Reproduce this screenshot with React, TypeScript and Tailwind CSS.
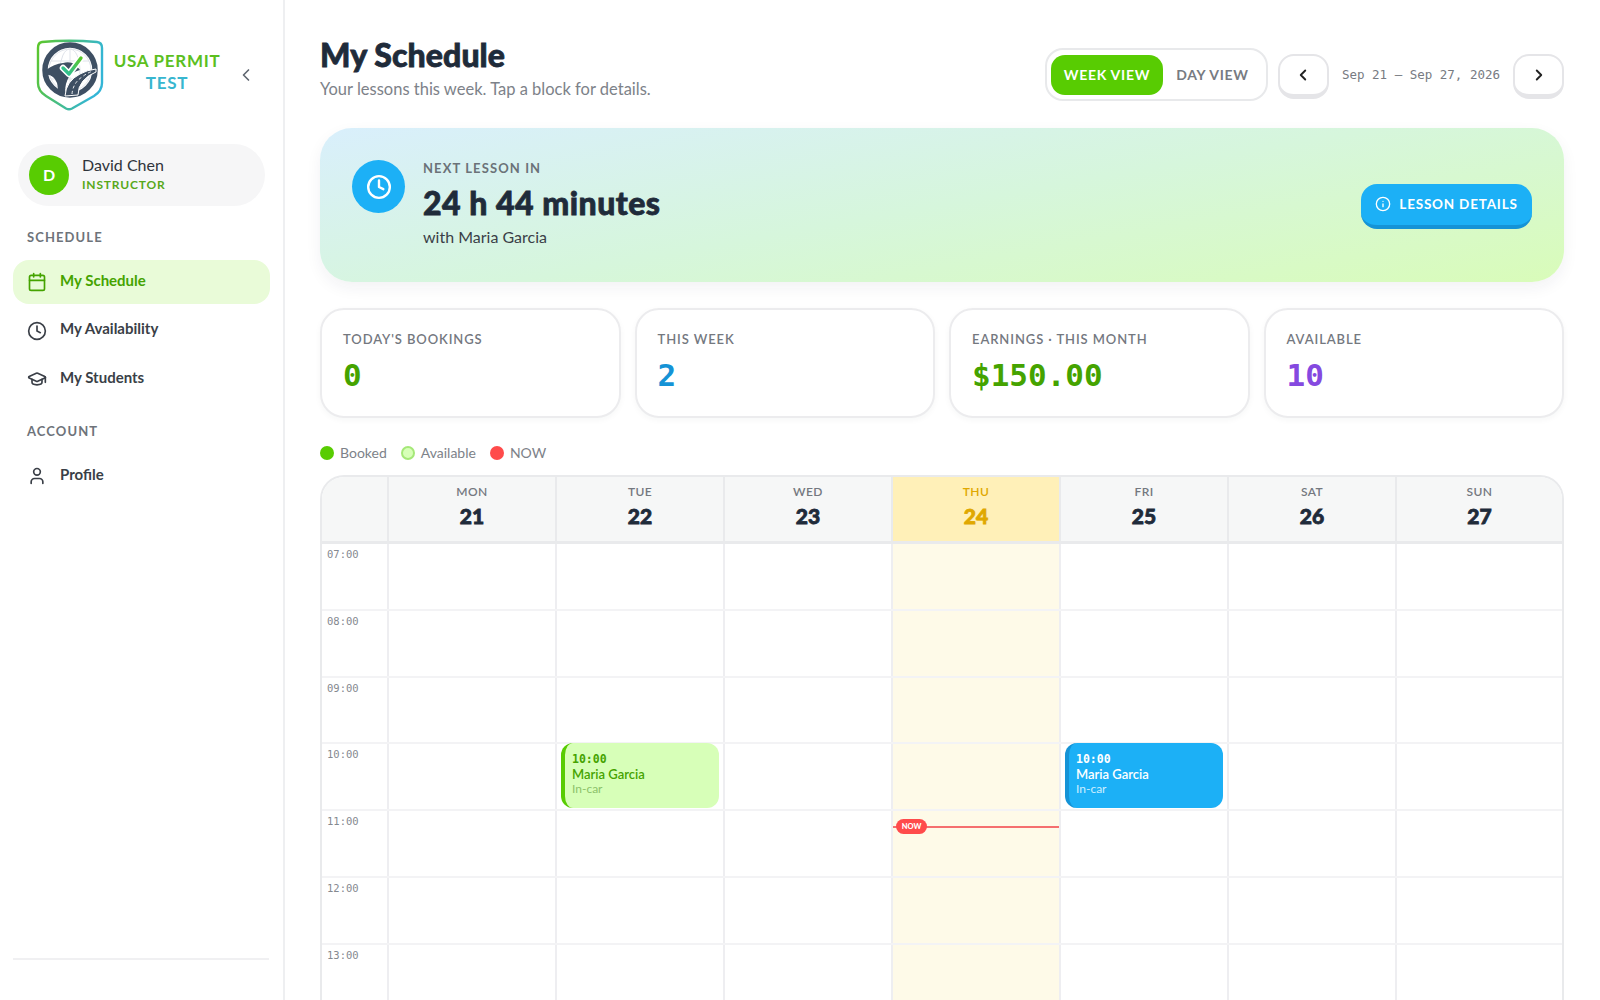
import { Calendar, ChevronLeft, ChevronRight, Clock, GraduationCap, Info, User } from 'lucide-react';

const sans = 'font-["Lato","Noto_Sans",sans-serif]';
const display = 'font-["Lato",sans-serif] font-black [-webkit-text-stroke:0.8px_currentColor]';
const mono = 'font-["DejaVu_Sans_Mono","Liberation_Mono",monospace]';

const days = [
  { name: 'MON', num: 21 },
  { name: 'TUE', num: 22 },
  { name: 'WED', num: 23 },
  { name: 'THU', num: 24, today: true },
  { name: 'FRI', num: 25 },
  { name: 'SAT', num: 26 },
  { name: 'SUN', num: 27 },
];
const hours = ['07:00', '08:00', '09:00', '10:00', '11:00', '12:00', '13:00'];
const stats = [
  { label: "TODAY'S BOOKINGS", value: '0', color: 'text-[#45a300]' },
  { label: 'THIS WEEK', value: '2', color: 'text-[#1593d6]' },
  { label: 'EARNINGS · THIS MONTH', value: '$150.00', color: 'text-[#45a300]' },
  { label: 'AVAILABLE', value: '10', color: 'text-[#8549e0]' },
];

function Logo() {
  return (
    <svg width="70" height="72" viewBox="0 0 70 72" fill="none">
      <defs>
        <linearGradient id="shield" x1="0" y1="0" x2="1" y2="0.3">
          <stop offset="0" stopColor="#5cc62a" />
          <stop offset="1" stopColor="#33b5d6" />
        </linearGradient>
        <linearGradient id="check" x1="0" y1="1" x2="1" y2="0">
          <stop offset="0" stopColor="#2bbfa0" />
          <stop offset="1" stopColor="#58c72a" />
        </linearGradient>
      </defs>
      <path
        d="M6 3Q33 0.5 61 3Q66 3.5 66 9L66 44Q66 52 58 57L36 69.5Q33 71 30 69.5L10 57Q2 52 2 44L2 9Q2 3.5 6 3Z"
        stroke="url(#shield)"
        strokeWidth="2.4"
        fill="#fff"
      />
      <g stroke="#dfe3ea" strokeWidth="1">
        <circle cx="34" cy="31" r="21" />
        <ellipse cx="34" cy="31" rx="10" ry="21" />
        <path d="M15 22H53M15 40H53M34 10V52" />
      </g>
      <circle cx="34" cy="31" r="25" stroke="#3e4f63" strokeWidth="5.5" />
      <path
        d="M10 31Q18 25 27 24Q33 22 39 25L44 31Q36 33 33 38Q29 44 29 54L22 52Q22 42 17 38Q13 35 10 36Z"
        fill="#3e4f63"
      />
      <path d="M29 57Q30 42 44 35Q51 31 60 30L60 33Q52 36 47 42Q42 48 42 56Z" fill="#3e4f63" stroke="#fff" strokeWidth="1" />
      <path d="M36 55Q37 44 46 38Q51 34 57 32" stroke="#fff" strokeWidth="0.9" strokeDasharray="3 2.5" />
      <path d="M27 29L33 35L45 19" stroke="#fff" strokeWidth="6.5" strokeLinecap="round" strokeLinejoin="round" />
      <path d="M27 29L33 35L45 19" stroke="url(#check)" strokeWidth="3.4" strokeLinecap="round" strokeLinejoin="round" />
    </svg>
  );
}

function NavItem({ icon, label, active }: { icon: React.ReactNode; label: string; active?: boolean }) {
  return (
    <div
      className={`flex h-11 items-center gap-[13px] rounded-2xl pl-[14px] text-[15px] font-bold ${
        active ? 'bg-[#e9fbd8] text-[#45a300]' : 'text-[#3a3f47]'
      }`}
    >
      {icon}
      <span className="-translate-y-[2px]">{label}</span>
    </div>
  );
}

function Sidebar() {
  return (
    <aside className="flex h-full w-[285px] shrink-0 flex-col border-r-2 border-[#eeeff1] px-[13px]">
      <div className="flex h-[144px] items-start">
        <div className="mt-[39px] ml-[23px] flex items-center">
          <Logo />
          <div className="ml-[6px] mt-[-6px] w-[110px] text-center text-[17px] leading-[22px] font-bold tracking-[0.7px]">
            <div className="text-[#5cbf1f]">USA PERMIT</div>
            <div className="text-[#38b6cf]">TEST</div>
          </div>
        </div>
        <ChevronLeft className="mt-[65px] ml-[14px] text-[#5f6670]" size={20} />
      </div>
      <div className="ml-[5px] flex h-[62px] w-[247px] items-center gap-[13px] rounded-full bg-[#f6f6f7] pl-[11px]">
        <div className="flex size-10 items-center justify-center rounded-full bg-[#58cc02] text-base font-bold text-white">
          D
        </div>
        <div className="-mt-[3px]">
          <div className="text-base leading-5 text-[#2f343b]">David Chen</div>
          <div className="mt-[2px] text-xs leading-4 font-bold tracking-[0.8px] text-[#58a81a]">INSTRUCTOR</div>
        </div>
      </div>
      <div className="mt-[22px] ml-[14px] text-[13px] leading-[18px] font-bold tracking-[1.1px] text-[#6e737a]">SCHEDULE</div>
      <div className="mt-[14px] flex flex-col gap-[4.5px]">
        <NavItem active label="My Schedule" icon={<Calendar size={20} strokeWidth={2} />} />
        <NavItem label="My Availability" icon={<Clock size={20} strokeWidth={2} />} />
        <NavItem label="My Students" icon={<GraduationCap size={20} strokeWidth={2} />} />
      </div>
      <div className="mt-[21px] ml-[14px] text-[13px] leading-[18px] font-bold tracking-[1.1px] text-[#6e737a]">ACCOUNT</div>
      <div className="mt-[14px]">
        <NavItem label="Profile" icon={<User size={20} strokeWidth={2} />} />
      </div>
      <div className="mt-auto mb-10 h-[2px] w-[256px] bg-[#f0f0f2]" />
    </aside>
  );
}

function Header() {
  return (
    <div className="flex h-[128px] items-start justify-between">
      <div className="pt-[36px]">
        <h1 className={`${display} text-[32px] leading-[38px] tracking-[0.1px] text-[#1f2b3a]`}>My Schedule</h1>
        <p className="mt-[5px] text-[16.5px] leading-5 text-[#7d8289]">Your lessons this week. Tap a block for details.</p>
      </div>
      <div className="flex items-center pt-[48px]">
        <div className="flex h-[53px] w-[223px] items-center rounded-[18px] border-2 border-[#e8e9eb] p-1">
          <div className="flex h-10 w-[112px] items-center justify-center rounded-[14px] bg-[#58cc02] text-sm font-bold tracking-[0.7px] text-white">
            WEEK VIEW
          </div>
          <div className="flex-1 text-center text-sm font-bold tracking-[0.7px] text-[#777b82]">DAY VIEW</div>
        </div>
        <div className="mt-[4px] ml-[10px] flex h-[45px] w-[51px] items-center justify-center rounded-2xl border-2 border-b-[5px] border-[#e5e5e8] bg-white">
          <ChevronLeft size={18} strokeWidth={2.5} className="text-[#222]" />
        </div>
        <span className={`${mono} mx-[13px] mt-[2px] text-[12.5px] whitespace-nowrap text-[#777b82]`}>Sep 21 – Sep 27, 2026</span>
        <div className="mt-[4px] flex h-[45px] w-[51px] items-center justify-center rounded-2xl border-2 border-b-[5px] border-[#e5e5e8] bg-white">
          <ChevronRight size={18} strokeWidth={2.5} className="text-[#222]" />
        </div>
      </div>
    </div>
  );
}

function Hero() {
  return (
    <div className="flex h-[154px] items-center justify-between rounded-[32px] bg-[linear-gradient(170deg,#d9effc_0%,#d6f6dc_50%,#d9fcb9_100%)] pr-8 pl-8 shadow-[0_6px_16px_rgba(30,40,60,0.06)]">
      <div className="mt-[32px] flex items-start gap-[18px] self-start">
        <div className="flex size-[53px] items-center justify-center rounded-full bg-[#1cb0f6]">
          <Clock size={26} strokeWidth={2.2} className="text-white" />
        </div>
        <div className="mt-[-1px]">
          <div className="text-[13px] leading-[18px] font-bold tracking-[1.1px] text-[#6b7278]">NEXT LESSON IN</div>
          <div className={`${display} mt-[7px] text-[32px] leading-[38px] tracking-[0.5px] text-[#1f2b3a]`}>24 h 44 minutes</div>
          <div className="mt-[5px] text-base leading-5 text-[#3a3f47]">with Maria Garcia</div>
        </div>
      </div>
      <div className="mt-[2px] flex h-[45px] w-[171px] items-center justify-center gap-2 rounded-2xl border-b-4 border-[#1593d6] bg-[#1cb0f6] text-[13.5px] font-bold tracking-[0.8px] text-white">
        <Info size={16} strokeWidth={2} />
        LESSON DETAILS
      </div>
    </div>
  );
}

function Stats() {
  return (
    <div className="mt-[26px] grid grid-cols-4 gap-[14px]">
      {stats.map((s) => (
        <div key={s.label} className="h-[110px] rounded-3xl border-2 border-[#ececee] bg-white pt-[20px] pl-[21px] shadow-[0_2px_6px_rgba(30,40,60,0.04)]">
          <div className="text-[13px] leading-[18px] font-semibold tracking-[0.9px] text-[#74787f]">{s.label}</div>
          <div className={`${mono} mt-[9px] text-[31px] leading-[36px] font-bold ${s.color}`}>{s.value}</div>
        </div>
      ))}
    </div>
  );
}

function Legend() {
  return (
    <div className="mt-[26px] flex h-[18px] items-center text-sm text-[#7d8289]">
      <span className="size-[14px] rounded-full bg-[#58cc02]" />
      <span className="ml-[6px]">Booked</span>
      <span className="ml-[14px] size-[14px] rounded-full border-2 border-[#a5e878] bg-[#d7ffb8]" />
      <span className="ml-[6px]">Available</span>
      <span className="ml-[14px] size-[14px] rounded-full bg-[#ff4b4b]" />
      <span className="ml-[6px]">NOW</span>
    </div>
  );
}

function LessonBlock({ variant }: { variant: 'green' | 'blue' }) {
  const green = variant === 'green';
  return (
    <div
      className={`absolute inset-x-[4px] top-[-1px] z-10 h-[65px] rounded-xl border-l-4 pt-[9px] pl-[7px] ${
        green ? 'border-[#58cc02] bg-[#d7ffb8]' : 'border-[#1593d6] bg-[#1cb0f6]'
      }`}
    >
      <div className={`${mono} text-[11.5px] leading-[14px] font-bold ${green ? 'text-[#45a300]' : 'text-white'}`}>10:00</div>
      <div className={`text-[13px] leading-[16px] font-semibold ${green ? 'text-[#45a300]' : 'text-white'}`}>Maria Garcia</div>
      <div className={`text-xs leading-[14px] ${green ? 'text-[#8cc26a]' : 'text-[#cdeeff]'}`}>In-car</div>
    </div>
  );
}

function CalendarGrid() {
  return (
    <div className="mt-[13px] overflow-hidden rounded-t-3xl border-x-2 border-t-2 border-[#e9eaec]">
      <div className="grid h-[67px] grid-cols-[65px_repeat(6,168px)_1fr] border-b-[3px] border-[#e9eaec] bg-[#f6f7f7]">
        <div />
        {days.map((d) => (
          <div
            key={d.name}
            className={`flex flex-col items-center border-l-2 border-[#e9eaec] pt-[7px] ${d.today ? 'bg-[#fff0b8]' : ''}`}
          >
            <div className={`text-xs leading-4 font-semibold tracking-[0.4px] ${d.today ? 'text-[#e0a800]' : 'text-[#74787f]'}`}>{d.name}</div>
            <div className={`${display} mt-[2px] text-[21px] leading-[28px] ${d.today ? 'text-[#e0a800]' : 'text-[#1f2b3a]'}`}>{d.num}</div>
          </div>
        ))}
      </div>
      {hours.map((h) => (
        <div key={h} className="grid h-[66.8px] grid-cols-[65px_repeat(6,168px)_1fr] border-b-2 border-[#f3f3f5]">
          <div className={`${mono} pt-[3px] pl-[5px] text-[10.5px] text-[#85898f]`}>{h}</div>
          {days.map((d) => (
            <div key={d.name} className={`relative border-l-2 border-[#eeeef1] ${d.today ? 'bg-[#fefae8]' : ''}`}>
              {h === '10:00' && d.num === 22 && <LessonBlock variant="green" />}
              {h === '10:00' && d.num === 25 && <LessonBlock variant="blue" />}
              {h === '11:00' && d.today && (
                <div className="absolute inset-x-0 top-[15px] z-10 h-[2px] bg-[#f56f6f]">
                  <span className="absolute top-[-7px] left-[3px] flex h-[15px] w-[31px] items-center justify-center rounded-full bg-[#ff4b4b] text-[7.5px] font-black text-white">
                    NOW
                  </span>
                </div>
              )}
            </div>
          ))}
        </div>
      ))}
    </div>
  );
}

export default function App() {
  return (
    <div className={`${sans} flex h-screen overflow-hidden bg-white`}>
      <Sidebar />
      <main className="h-full min-w-0 flex-1 overflow-hidden pr-9 pl-[35px]">
        <Header />
        <Hero />
        <Stats />
        <Legend />
        <CalendarGrid />
      </main>
    </div>
  );
}
